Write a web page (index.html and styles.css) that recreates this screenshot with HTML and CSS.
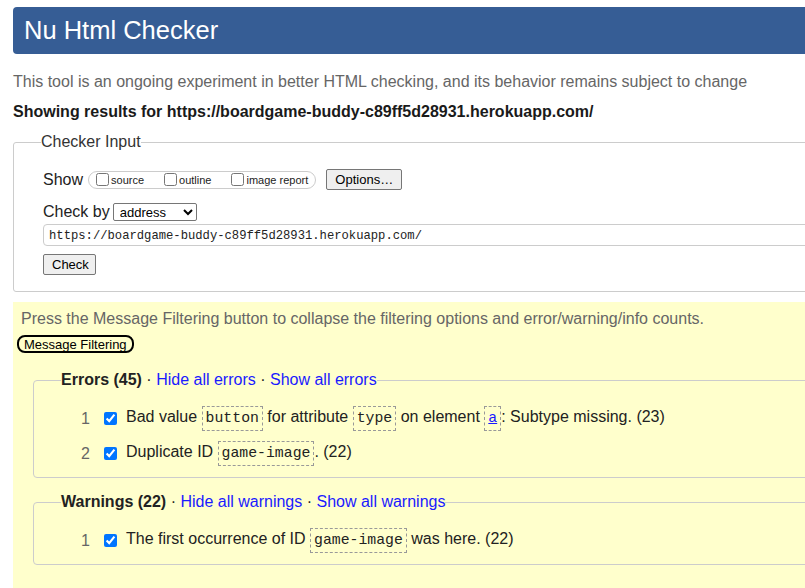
FILE: index.html
```html
<!DOCTYPE html>
<html lang="en">
<head>
<meta charset="utf-8">
<title>Nu Html Checker</title>
<link rel="stylesheet" href="styles.css">
</head>
<body>
<div class="page">
  <h1 class="title">Nu Html Checker</h1>
  <p class="intro">This tool is an ongoing experiment in better HTML checking, and its behavior remains subject to change</p>
  <p class="showing">Showing results for https://boardgame-buddy-c89ff5d28931.herokuapp.com/</p>

  <fieldset class="checker">
    <legend class="checker-legend">Checker Input</legend>
    <div class="row row-show">
      <span class="label">Show</span>
      <span class="pill">
        <label class="opt"><input type="checkbox" class="cb">source</label>
        <label class="opt"><input type="checkbox" class="cb">outline</label>
        <label class="opt"><input type="checkbox" class="cb">image report</label>
      </span>
      <button class="btn btn-options" type="button">Options…</button>
    </div>
    <div class="row row-by">
      <span class="label">Check by</span>
      <select class="sel"><option>address</option></select>
    </div>
    <input class="url" type="text" value="https://boardgame-buddy-c89ff5d28931.herokuapp.com/">
    <div class="row row-check">
      <button class="btn btn-check" type="button">Check</button>
    </div>
  </fieldset>

  <section class="results">
    <p class="press">Press the Message Filtering button to collapse the filtering options and error/warning/info counts.</p>
    <button class="filter-btn" type="button">Message Filtering</button>

    <fieldset class="group group-errors">
      <legend class="group-legend"><strong>Errors (45)</strong> · <a class="lnk" href="#">Hide all errors</a> · <a class="lnk" href="#">Show all errors</a></legend>
      <ol class="msgs">
        <li class="msg"><span class="num">1</span><input type="checkbox" class="mcb" checked><span class="txt">Bad value <code class="c">button</code> for attribute <code class="c">type</code> on element <code class="c"><a class="lnk" href="#">a</a></code>: Subtype missing. (23)</span></li>
        <li class="msg"><span class="num">2</span><input type="checkbox" class="mcb" checked><span class="txt">Duplicate ID <code class="c">game-image</code>. (22)</span></li>
      </ol>
    </fieldset>

    <fieldset class="group group-warnings">
      <legend class="group-legend"><strong>Warnings (22)</strong> · <a class="lnk" href="#">Hide all warnings</a> · <a class="lnk" href="#">Show all warnings</a></legend>
      <ol class="msgs">
        <li class="msg"><span class="num">1</span><input type="checkbox" class="mcb" checked><span class="txt">The first occurrence of ID <code class="c">game-image</code> was here. (22)</span></li>
      </ol>
    </fieldset>
  </section>
</div>
</body>
</html>
```
FILE: styles.css
```css
html {
  overflow: hidden;
  background: #fff;
}
body {
  margin: 0;
  font-family: "Liberation Sans", Arial, sans-serif;
  font-size: 16px;
  color: #222;
}
.page {
  width: 1100px;
  padding: 7px 0 0 13px;
}
.title {
  margin: 0;
  height: 47px;
  display: flex;
  align-items: center;
  padding-left: 11px;
  background: #365d95;
  color: #fff;
  font-size: 25.5px;
  font-weight: normal;
  border-radius: 4px 0 0 4px;
}
.intro {
  margin: 19px 0 0;
  line-height: 18px;
  color: #666;
}
.showing {
  margin: 12px 0 0;
  line-height: 18px;
  font-weight: bold;
  color: #1a1a1a;
}
.checker {
  margin: 12px 0 0;
  padding: 18px 0 16px 29px;
  border: 1px solid #ccc;
  border-radius: 3px;
}
.checker-legend {
  padding: 0;
  margin-left: -2px;
  line-height: 18px;
  color: #333;
}
.row {
  display: flex;
  align-items: center;
}
.label {
  line-height: 18px;
  color: #222;
}
.row-show {
  height: 21px;
}
.pill {
  display: inline-flex;
  align-items: center;
  gap: 20px;
  height: 18px;
  box-sizing: border-box;
  margin-left: 5px;
  padding: 0 7px 0 7px;
  border: 1px solid #ccc;
  border-radius: 9px;
}
.opt {
  display: inline-flex;
  align-items: center;
  font-size: 11px;
  color: #222;
}
.cb {
  margin: 0 2px 0 0;
  width: 13px;
  height: 13px;
}
.btn {
  font-family: "Liberation Sans", Arial, sans-serif;
  font-size: 13px;
  height: 21px;
  padding: 0 8px;
  margin: 0;
  color: #000;
  background: #efefef;
  border: 1px solid #767676;
  border-radius: 2px;
}
.btn-options {
  margin-left: 10px;
  width: 76px;
}
.row-by {
  margin-top: 13px;
  height: 18px;
}
.sel {
  margin-left: 3px;
  width: 84px;
  height: 18px;
  font-family: "Liberation Sans", Arial, sans-serif;
  font-size: 13px;
  padding: 0 2px;
  color: #000;
  background: #fff;
  border: 1px solid #767676;
  border-radius: 2px;
}
.url {
  display: block;
  margin-top: 3px;
  box-sizing: border-box;
  width: 1040px;
  height: 22px;
  padding: 1px 5px 0;
  font-family: "Liberation Mono", "Courier New", monospace;
  font-size: 12.2px;
  color: #222;
  background: #fff;
  border: 1px solid #ccc;
  border-radius: 4px;
}
.row-check {
  margin-top: 8px;
}
.btn-check {
  width: 53px;
}
.results {
  margin-top: 10px;
  min-height: 300px;
  padding: 8px 0 0 8px;
  background: #ffffcc;
}
.press {
  margin: 0;
  line-height: 18px;
  color: #666;
}
.filter-btn {
  display: block;
  margin: 7px 0 0 -4px;
  height: 18px;
  padding: 0 5px;
  font-family: "Liberation Sans", Arial, sans-serif;
  font-size: 13px;
  color: #000;
  background: transparent;
  border: 2px solid #000;
  border-radius: 8px;
}
.group {
  margin: 18px 0 0 12px;
  padding: 12px 0 6px 27px;
  border: 1px solid #ccc;
  border-radius: 4px;
}
.group-warnings {
  margin-top: 15px;
}
.group-legend {
  padding: 0;
  line-height: 18px;
  color: #222;
}
.lnk {
  color: #1a1aff;
  text-decoration: none;
}
.c .lnk {
  text-decoration: underline;
}
.msgs {
  list-style: none;
  margin: 0;
  padding: 0;
}
.msg {
  display: flex;
  align-items: center;
  height: 35px;
}
.num {
  width: 29px;
  text-align: right;
  color: #666;
}
.mcb {
  margin: 0 0 0 14px;
  width: 13px;
  height: 13px;
}
.txt {
  margin-left: 9px;
  color: #222;
}
.c {
  display: inline-block;
  padding: 3px 3px;
  font-family: "Liberation Mono", "Courier New", monospace;
  font-size: 14.8px;
  line-height: 17px;
  border: 1px dashed #999;
  color: #222;
}
```
